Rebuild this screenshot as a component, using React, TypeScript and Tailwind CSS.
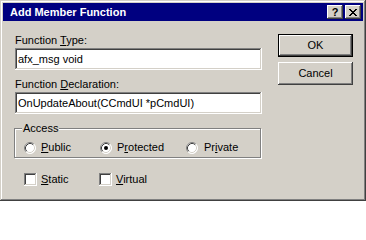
import React from 'react';

const raised =
    'shadow-[inset_-1px_-1px_0_#404040,inset_1px_1px_0_#ffffff,inset_-2px_-2px_0_#808080]';
const sunken =
    'shadow-[inset_-1px_-1px_0_#ffffff,inset_1px_1px_0_#808080,inset_-2px_-2px_0_#d4d0c8,inset_2px_2px_0_#404040]';

function Radio({ checked }: { checked?: boolean }) {
    return (
        <svg width="12" height="12" viewBox="0 0 12 12" className="shrink-0">
            <circle cx="6" cy="6" r="5.5" fill="#ffffff" />
            <path d="M2.11 9.89 A5.5 5.5 0 0 1 9.89 2.11" fill="none" stroke="#808080" strokeWidth="1" />
            <path d="M9.89 2.11 A5.5 5.5 0 0 1 2.11 9.89" fill="none" stroke="#ffffff" strokeWidth="1" />
            <path d="M2.82 9.18 A4.5 4.5 0 0 1 9.18 2.82" fill="none" stroke="#404040" strokeWidth="1" />
            <path d="M9.18 2.82 A4.5 4.5 0 0 1 2.82 9.18" fill="none" stroke="#d4d0c8" strokeWidth="1" />
            {checked && <circle cx="6" cy="6" r="2" fill="#000000" />}
        </svg>
    );
}

function Check() {
    return <div className={`w-[13px] h-[13px] shrink-0 bg-white ${sunken}`} />;
}

function CloseGlyph() {
    const rows = ['11000011', '01100110', '00111100', '00011000', '00111100', '01100110', '11000011'];
    return (
        <svg width="8" height="7" viewBox="0 0 8 7" shapeRendering="crispEdges">
            {rows.map((r, y) =>
                r.split('').map((c, x) => (c === '1' ? <rect key={`${x}-${y}`} x={x} y={y} width="1" height="1" fill="#000" /> : null))
            )}
        </svg>
    );
}

export default function App() {
    return (
        <div className="w-[366px] h-[201px] bg-[#d4d0c8] p-[3px] flex flex-col font-['Liberation_Sans',Arial,sans-serif] text-[11px] leading-[13px] text-black shadow-[inset_-1px_-1px_0_#404040,inset_1px_1px_0_#d4d0c8,inset_-2px_-2px_0_#808080,inset_2px_2px_0_#ffffff]">
            {/* title bar */}
            <div className="h-[18px] bg-[#000080] flex items-center pl-[7px] pr-[2px]">
                <span className="flex-1 text-white font-bold text-[11px]">Add Member Function</span>
                <div className={`w-[16px] h-[14px] bg-[#d4d0c8] flex items-center justify-center font-bold text-[11px] leading-[11px] ${raised}`}>?</div>
                <div className={`ml-[2px] w-[16px] h-[14px] bg-[#d4d0c8] flex items-center justify-center ${raised}`}>
                    <CloseGlyph />
                </div>
            </div>

            <div className="flex pl-[12px] pt-[13px]">
                {/* left column */}
                <div className="w-[247px] flex flex-col">
                    <label>
                        Function <u className="underline-offset-1">T</u>ype:
                    </label>
                    <div className={`mt-[1px] h-[22px] bg-white flex items-center pl-[3px] ${sunken}`}>afx_msg void</div>

                    <label className="mt-[8px]">
                        Function <u className="underline-offset-1">D</u>eclaration:
                    </label>
                    <div className={`mt-[1px] h-[22px] bg-white flex items-center pl-[3px] whitespace-nowrap overflow-hidden ${sunken}`}>
                        OnUpdateAbout(CCmdUI *pCmdUI)
                    </div>

                    <div className="relative mt-[14px] -ml-[1px] w-[247px] h-[30px] border border-[#808080] shadow-[1px_1px_0_#ffffff,inset_1px_1px_0_#ffffff]">
                        <span className="absolute left-[7px] -top-[7px] bg-[#d4d0c8] px-[1px]">Access</span>
                        <div className="flex items-center pl-[9px] pt-[12px]">
                            <div className="w-[76px] flex items-center gap-[5px]">
                                <Radio />
                                <span>
                                    <u className="underline-offset-1">P</u>ublic
                                </span>
                            </div>
                            <div className="w-[86px] flex items-center gap-[5px]">
                                <Radio checked />
                                <span>
                                    P<u className="underline-offset-1">r</u>otected
                                </span>
                            </div>
                            <div className="flex items-center gap-[6px]">
                                <Radio />
                                <span>
                                    Pr<u className="underline-offset-1">i</u>vate
                                </span>
                            </div>
                        </div>
                    </div>

                    <div className="flex items-center pl-[9px] mt-[15px]">
                        <div className="w-[75px] flex items-center gap-[4px]">
                            <Check />
                            <span>
                                <u className="underline-offset-1">S</u>tatic
                            </span>
                        </div>
                        <div className="flex items-center gap-[4px]">
                            <Check />
                            <span>
                                <u className="underline-offset-1">V</u>irtual
                            </span>
                        </div>
                    </div>
                </div>

                {/* right column */}
                <div className="ml-[16px] flex flex-col gap-[5px]">
                    <button className={`w-[75px] h-[23px] border border-black bg-[#d4d0c8] flex items-center justify-center ${raised}`}>OK</button>
                    <button className={`w-[75px] h-[23px] bg-[#d4d0c8] flex items-center justify-center ${raised}`}>Cancel</button>
                </div>
            </div>
        </div>
    );
}
